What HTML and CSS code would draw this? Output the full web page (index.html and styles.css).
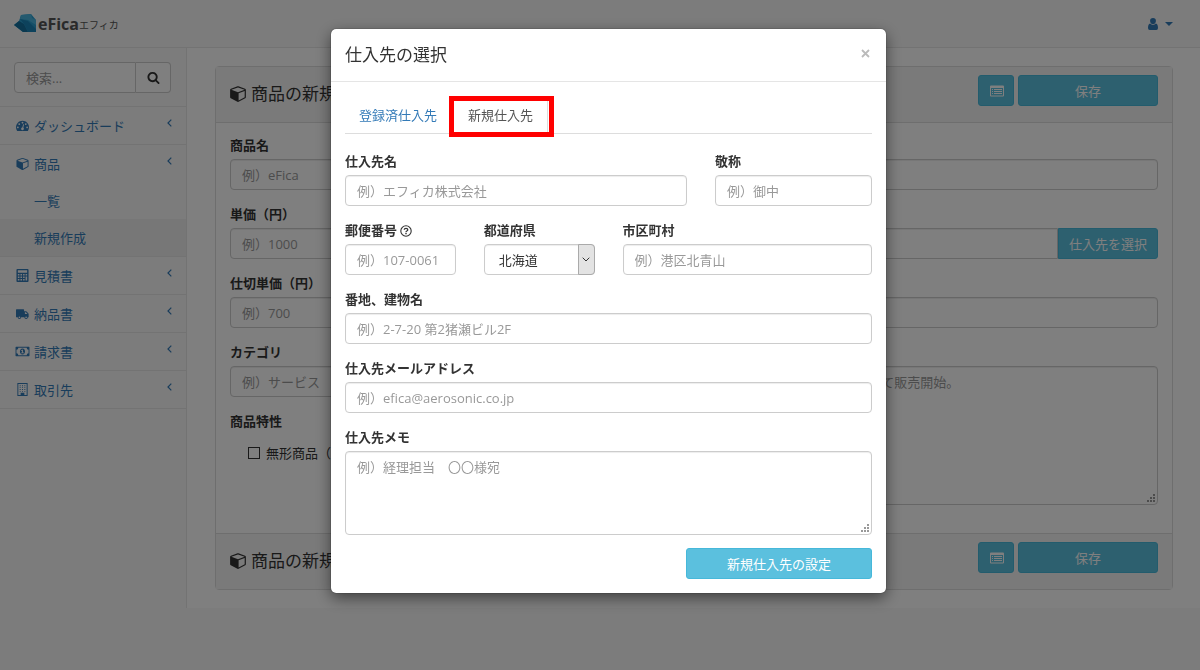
FILE: index.html
```html
<!DOCTYPE html>
<html lang="ja">
<head>
<meta charset="utf-8">
<meta name="viewport" content="width=device-width, initial-scale=1">
<title>eFica エフィカ</title>
<link rel="stylesheet" href="styles.css">
</head>
<body>
<svg class="sprite" aria-hidden="true">
  <symbol id="i-search" viewBox="0 0 1792 1792"><path d="M1216 832q0-185-131.5-316.5t-316.5-131.5-316.5 131.5-131.5 316.5 131.5 316.5 316.5 131.5 316.5-131.5 131.5-316.5zm512 832q0 52-38 90t-90 38q-54 0-90-38l-343-342q-179 124-399 124-143 0-273.5-55.5t-225-150-150-225-55.5-273.5 55.5-273.5 150-225 225-150 273.5-55.5 273.5 55.5 225 150 150 225 55.5 273.5q0 220-124 399l343 343q37 37 37 90z"/></symbol>
  <symbol id="i-cube" viewBox="0 0 1664 1792"><path d="M896 1629l640-349v-636l-640 233v752zm-64-865l698-254-698-254-698 254zm832-252v768q0 35-18 65t-49 47l-704 384q-28 16-61 16t-61-16l-704-384q-31-17-49-47t-18-65v-768q0-40 23-73t61-47l704-256q22-8 44-8t44 8l704 256q38 14 61 47t23 73z"/></symbol>
  <symbol id="i-dash" viewBox="0 0 1792 1792"><path d="M384 1152q0-53-37.5-90.5t-90.5-37.5-90.5 37.5-37.5 90.5 37.5 90.5 90.5 37.5 90.5-37.5 37.5-90.5zm192-448q0-53-37.5-90.5t-90.5-37.5-90.5 37.5-37.5 90.5 37.5 90.5 90.5 37.5 90.5-37.5 37.5-90.5zm428 481l101-382q6-26-7.5-48.5t-38.5-29.5-48 6.5-30 39.5l-101 382q-60 5-107 43.5t-63 98.5q-20 77 20 146t117 89 146-20 89-117q16-60-6-117t-72-91zm660-33q0-53-37.5-90.5t-90.5-37.5-90.5 37.5-37.5 90.5 37.5 90.5 90.5 37.5 90.5-37.5 37.5-90.5zm-640-640q0-53-37.5-90.5t-90.5-37.5-90.5 37.5-37.5 90.5 37.5 90.5 90.5 37.5 90.5-37.5 37.5-90.5zm448 192q0-53-37.5-90.5t-90.5-37.5-90.5 37.5-37.5 90.5 37.5 90.5 90.5 37.5 90.5-37.5 37.5-90.5zm320 448q0 261-141 483-19 29-54 29h-1402q-35 0-54-29-141-221-141-483 0-182 71-348t191-286 286-191 348-71 348 71 286 191 191 286 71 348z"/></symbol>
  <symbol id="i-calc" viewBox="0 0 14 14"><path fill-rule="evenodd" d="M1.500 0h11a1 1 0 0 1 1 1v12a1 1 0 0 1-1 1h-11a1 1 0 0 1-1-1V1a1 1 0 0 1 1-1zM2 1.300v2.700h10V1.300zM2 5.500v1.500h1.700V5.500zm2.800 0v1.500h1.700V5.500zm2.800 0v1.500h1.700V5.500zm2.700 0v1.500H12V5.500zM2 8.200v1.500h1.700V8.200zm2.800 0v1.500h1.700V8.200zm2.800 0v1.500h1.700V8.200zM2 10.900v1.500h1.700v-1.500zm2.800 0v1.500h1.700v-1.500zm2.800 0v1.500h1.700v-1.500zm2.700-2.700v4.200H12V8.200z"/></symbol>
  <symbol id="i-truck" viewBox="0 0 14 14"><path fill-rule="evenodd" d="M.5 2.500h7.700a.5.5 0 0 1 .5.500v1.500h1.800q.5 0 .9.400l1.800 1.900q.4.400.4.900V11h-.8a1.900 1.900 0 0 1-3.800 0H5.600a1.900 1.900 0 0 1-3.800 0H0V3a.5.5 0 0 1 .5-.5zM9.600 5.700v1.900h2.800l-1.800-1.900zM3.700 10.100a.9.900 0 1 0 0 1.800.9.900 0 0 0 0-1.800zm7.200 0a.9.900 0 1 0 0 1.800.9.900 0 0 0 0-1.800z"/></symbol>
  <symbol id="i-money" viewBox="0 0 15 14"><path fill-rule="evenodd" d="M.5 2h14a.5.5 0 0 1 .5.500v9a.5.5 0 0 1-.5.500H.5a.5.5 0 0 1-.5-.5v-9A.5.5 0 0 1 .5 2zM3 3a2 2 0 0 1-2 2v4a2 2 0 0 1 2 2h9a2 2 0 0 1 2-2V5a2 2 0 0 1-2-2zM7.500 3.800c3.700 0 3.700 6.400 0 6.400s-3.700-6.400 0-6.400zM7 5L5.900 6l.6.600.5-.4v2H6v.8h3v-.8H8V5z"/></symbol>
  <symbol id="i-building" viewBox="0 0 12 14"><path fill-rule="evenodd" d="M.5 0h11v14H.5zM1.500 1v12H4v-2.500h4V13h2.500V1zM3 2.500h1v1H3zm2.500 0h1v1h-1zm2.500 0h1v1H8zm-5 2h1v1H3zm2.500 0h1v1h-1zm2.500 0h1v1H8zm-5 2h1v1H3zm2.500 0h1v1h-1zm2.500 0h1v1H8zm-5 2h1v1H3zm2.500 0h1v1h-1zm2.500 0h1v1H8z"/></symbol>
  <symbol id="i-user" viewBox="0 0 10 12"><path d="M5 0a2.900 2.900 0 0 1 2.900 3C7.900 4.800 6.600 6.200 5 6.200S2.100 4.800 2.100 3A2.900 2.900 0 0 1 5 0zM2.200 5.600q1.200 1.400 2.800 1.400t2.800-1.400C9.500 5.800 10 8 10 10q0 2-1.700 2H1.700Q0 12 0 10c0-2 .5-4.200 2.200-4.400z"/></symbol>
  <symbol id="i-list" viewBox="0 0 14 12"><path fill-rule="evenodd" d="M1 .5h12a1 1 0 0 1 1 1v9a1 1 0 0 1-1 1H1a1 1 0 0 1-1-1v-9a1 1 0 0 1 1-1zM1 3v7.500h12V3zM2 4h1v1H2zm2 0h8v1H4zM2 6h1v1H2zm2 0h8v1H4zM2 8h1v1H2zm2 0h8v1H4z"/></symbol>
  <symbol id="i-left" viewBox="0 0 5 8"><path d="M4.300.7L1 4l3.300 3.300" fill="none" stroke="currentColor" stroke-width="1.200"/></symbol>
  <symbol id="i-down" viewBox="0 0 8 5"><path d="M.7.700L4 4 7.300.7" fill="none" stroke="currentColor"/></symbol>
  <symbol id="i-close" viewBox="0 0 9 9"><path d="M1 1l7 7M8 1L1 8" fill="none" stroke="currentColor" stroke-width="1.800"/></symbol>
  <symbol id="i-help" viewBox="0 0 12 12"><circle cx="6" cy="6" r="5.200" fill="none" stroke="currentColor" stroke-width="1.100"/><path d="M4.200 4.800Q4.300 3.300 6 3.300T7.800 4.700Q7.800 5.500 6.800 6 6 6.400 6 7.200" fill="none" stroke="currentColor" stroke-width="1.300"/><path d="M5.300 8h1.400v1.300H5.300z"/></symbol>
</svg>

<header class="topbar">
  <a class="brand" href="#">
    <svg class="brand-mark" viewBox="0 0 23 19" aria-hidden="true">
      <path fill="#2a9fd0" d="M7 1l10-1 5 6v12H9L0 11l5-4z"/>
      <path fill="#4bb4de" d="M7 1l10-1 1 4 4 2v5l-8-5-8-1z"/>
      <path fill="#14719f" d="M0 11l5-4 5 3 4 8H9z"/>
      <path fill="#1b85b8" d="M6 5l8 2 8 8v3h-8l-4-8z"/>
    </svg>
    <strong class="brand-name">eFica</strong><span class="brand-kana">エフィカ</span>
  </a>
  <button class="user-menu" type="button" aria-label="ユーザー"><svg class="user-icon"><use href="#i-user"/></svg><span class="caret"></span></button>
</header>

<div class="layout">
  <nav class="sidebar">
    <form class="search">
      <input class="search-input" type="text" placeholder="検索..." aria-label="検索">
      <button class="search-button" type="button" aria-label="検索する"><svg class="search-icon"><use href="#i-search"/></svg></button>
    </form>
    <ul class="menu">
      <li><a class="menu-link" href="#"><svg class="menu-icon"><use href="#i-dash"/></svg>ダッシュボード<svg class="arrow"><use href="#i-left"/></svg></a></li>
      <li><a class="menu-link" href="#"><svg class="menu-icon"><use href="#i-cube"/></svg>商品<svg class="arrow"><use href="#i-left"/></svg></a>
        <ul class="submenu">
          <li><a class="sub-link" href="#">一覧</a></li>
          <li><a class="sub-link current" href="#">新規作成</a></li>
        </ul>
      </li>
      <li><a class="menu-link" href="#"><svg class="menu-icon"><use href="#i-calc"/></svg>見積書<svg class="arrow"><use href="#i-left"/></svg></a></li>
      <li><a class="menu-link" href="#"><svg class="menu-icon"><use href="#i-truck"/></svg>納品書<svg class="arrow"><use href="#i-left"/></svg></a></li>
      <li><a class="menu-link" href="#"><svg class="menu-icon"><use href="#i-money"/></svg>請求書<svg class="arrow"><use href="#i-left"/></svg></a></li>
      <li><a class="menu-link" href="#"><svg class="menu-icon"><use href="#i-building"/></svg>取引先<svg class="arrow"><use href="#i-left"/></svg></a></li>
    </ul>
  </nav>

  <main class="content">
    <section class="panel">
      <div class="panel-bar panel-head">
        <h1 class="panel-title"><svg class="title-icon"><use href="#i-cube"/></svg>商品の新規作成</h1>
        <div class="actions"><button class="btn btn-icon" type="button" aria-label="一覧"><svg class="list-icon"><use href="#i-list"/></svg></button><button class="btn btn-save" type="button">保存</button></div>
      </div>
      <div class="panel-body">
        <div class="field"><label for="p-name">商品名</label><input class="control" id="p-name" type="text" placeholder="例）eFica"></div>
        <div class="halves">
          <div class="field"><label for="p-price">単価（円）</label><input class="control" id="p-price" type="text" placeholder="例）1000"></div>
          <div class="field"><label for="p-supplier">仕入先</label>
            <div class="group"><input class="control" id="p-supplier" type="text"><button class="btn btn-addon" type="button">仕入先を選択</button></div>
          </div>
        </div>
        <div class="halves">
          <div class="field"><label for="p-cost">仕切単価（円）</label><input class="control" id="p-cost" type="text" placeholder="例）700"></div>
          <div class="field"><label for="p-unit">単位</label><input class="control" id="p-unit" type="text"></div>
        </div>
        <div class="halves">
          <div>
            <div class="field"><label for="p-cat">カテゴリ</label><input class="control" id="p-cat" type="text" placeholder="例）サービス"></div>
            <fieldset class="traits"><legend>商品特性</legend><label class="check"><input type="checkbox">無形商品（）</label></fieldset>
          </div>
          <div class="field"><label for="p-memo">商品メモ</label><textarea class="control memo-tall" id="p-memo" placeholder="例）2017年10月より全国にて販売開始。"></textarea></div>
        </div>
      </div>
      <div class="panel-bar panel-foot">
        <h2 class="panel-title"><svg class="title-icon"><use href="#i-cube"/></svg>商品の新規作成</h2>
        <div class="actions"><button class="btn btn-icon" type="button" aria-label="一覧"><svg class="list-icon"><use href="#i-list"/></svg></button><button class="btn btn-save" type="button">保存</button></div>
      </div>
    </section>
  </main>
</div>

<div class="backdrop">
  <div class="modal" role="dialog" aria-modal="true" aria-labelledby="modal-title">
    <div class="modal-head">
      <h2 class="modal-title" id="modal-title">仕入先の選択</h2>
      <button class="close" type="button" aria-label="閉じる"><svg class="close-icon"><use href="#i-close"/></svg></button>
    </div>
    <div class="modal-body">
      <div class="tabs">
        <a class="tab" href="#">登録済仕入先</a>
        <a class="tab active" href="#">新規仕入先</a>
      </div>
      <form class="form-grid">
        <div class="field span-8"><label for="s-name">仕入先名</label><input class="control" id="s-name" type="text" placeholder="例）エフィカ株式会社"></div>
        <div class="field span-4"><label for="s-title">敬称</label><input class="control" id="s-title" type="text" placeholder="例）御中"></div>
        <div class="field span-3"><label for="s-zip">郵便番号 <svg class="help-icon"><use href="#i-help"/></svg></label><input class="control" id="s-zip" type="text" placeholder="例）107-0061"></div>
        <div class="field span-3"><label for="s-pref">都道府県</label>
          <div class="select"><select class="control" id="s-pref"><option>北海道</option></select><span class="select-arrow"><svg class="down-icon"><use href="#i-down"/></svg></span></div>
        </div>
        <div class="field span-6"><label for="s-city">市区町村</label><input class="control" id="s-city" type="text" placeholder="例）港区北青山"></div>
        <div class="field span-12"><label for="s-addr">番地、建物名</label><input class="control" id="s-addr" type="text" placeholder="例）2-7-20 第2猪瀬ビル2F"></div>
        <div class="field span-12"><label for="s-mail">仕入先メールアドレス</label><input class="control" id="s-mail" type="text" placeholder="例）efica@aerosonic.co.jp"></div>
        <div class="field span-12"><label for="s-memo">仕入先メモ</label><textarea class="control memo" id="s-memo" placeholder="例）経理担当　〇〇様宛"></textarea></div>
      </form>
      <div class="modal-actions"><button class="btn btn-submit" type="button">新規仕入先の設定</button></div>
    </div>
  </div>
</div>
</body>
</html>
```
FILE: styles.css
```css
* { box-sizing: border-box; }
body {
  margin: 0;
  min-height: 100vh;
  background: #f8f8f8;
  color: #333;
  font: 13px/18px "Open Sans", "Noto Sans CJK JP", sans-serif;
}
input, select, textarea, button { font: inherit; color: inherit; margin: 0; }
a { color: #337ab7; text-decoration: none; }
ul { list-style: none; margin: 0; padding: 0; }
h1, h2 { margin: 0; font-weight: 400; font-size: 17px; line-height: 24px; }
svg { fill: currentColor; flex: none; }
.sprite { position: absolute; width: 0; height: 0; }

.topbar {
  display: flex;
  align-items: center;
  justify-content: space-between;
  height: 48px;
  padding: 0 27px 0 14px;
  border-bottom: 1px solid #e7e7e7;
}
.brand { display: flex; align-items: center; color: #555; }
.brand-mark { width: 23px; height: 19px; margin-right: 1px; }
.brand-name { font: 700 16px/24px "Open Sans", sans-serif; color: #555; }
.brand-kana { font-size: 10px; padding-top: 2px; }
.user-menu { display: flex; align-items: center; gap: 7px; border: 0; padding: 0; background: none; color: #337ab7; }
.user-icon { width: 10px; height: 12px; }
.caret { border: 4px solid transparent; border-top-color: currentColor; border-bottom: 0; }

.layout { display: flex; align-items: flex-start; }
.sidebar { flex: none; width: 186px; }
.search { display: flex; padding: 14px 15px 13px 14px; border-bottom: 1px solid #e7e7e7; }
.search-input {
  flex: 1;
  min-width: 0;
  height: 31px;
  padding: 0 11px;
  border: 1px solid #ccc;
  border-radius: 4px 0 0 4px;
  background: #fff;
}
.search-button {
  display: grid;
  place-items: center;
  width: 35px;
  padding: 0;
  border: 1px solid #ccc;
  border-left: 0;
  border-radius: 0 4px 4px 0;
  background: #fff;
}
.search-icon { width: 13px; height: 13px; }
.menu > li { border-bottom: 1px solid #e7e7e7; }
.menu-link { display: flex; align-items: center; gap: 4px; height: 37px; padding: 0 14px 0 15px; }
.menu-icon { width: 15px; height: 13px; }
.arrow { width: 5px; height: 8px; margin: 0 0 5px auto; }
.sub-link { display: block; padding: 10px 34px 9px; }
.current { background: #eee; }

.content {
  flex: 1;
  min-width: 0;
  padding: 18px 27px 18px 28px;
  border-left: 1px solid #e7e7e7;
  background: #fff;
}
.panel { border: 1px solid #ddd; border-radius: 4px; }
.panel-bar { display: flex; justify-content: space-between; align-items: center; height: 56px; padding: 0 14px 8px; background: #f5f5f5; }
.panel-head { border-bottom: 1px solid #ddd; }
.panel-head .panel-title, .panel-foot .panel-title { padding-top: 6px; }
.panel-foot { border-top: 1px solid #ddd; }
.panel-title { display: flex; align-items: center; gap: 5px; color: #333; }
.title-icon { width: 16px; height: 17px; }
.panel-body { padding: 13px 14px; }
.actions { display: flex; gap: 4px; }
.halves { display: grid; grid-template-columns: 1fr 1fr; gap: 28px; }
.halves > div { min-width: 0; }

.field { display: flex; flex-direction: column; gap: 5px; margin-bottom: 15px; }
.field label, .traits legend { font-weight: 700; height: 18px; padding: 0; }
.control {
  width: 100%;
  height: 31px;
  padding: 5px 11px;
  border: 1px solid #ccc;
  border-radius: 4px;
  background: #fff;
  box-shadow: inset 0 1px 1px rgba(0, 0, 0, .075);
}
::placeholder { color: #999; opacity: 1; }
textarea.control { display: block; padding-top: 6px; }
.memo { height: 84px; }
.memo-tall { height: 139px; }
textarea::-webkit-resizer {
  background:
    linear-gradient(#999, #999) 11px 5px / 2px 2px no-repeat,
    linear-gradient(#999, #999) 8px 8px / 2px 2px no-repeat,
    linear-gradient(#999, #999) 11px 8px / 2px 2px no-repeat,
    linear-gradient(#999, #999) 5px 11px / 2px 2px no-repeat,
    linear-gradient(#999, #999) 8px 11px / 2px 2px no-repeat,
    linear-gradient(#999, #999) 11px 11px / 2px 2px no-repeat;
}
.group { display: flex; }
.group .control { flex: 1; min-width: 0; border-radius: 4px 0 0 4px; }
.traits { border: 0; margin: 0; padding: 0; }
.check { display: flex; align-items: center; gap: 6px; padding: 14px 0 0 18px; }
.check input {
  appearance: none;
  width: 12px;
  height: 12px;
  border: 1px solid #333;
  background: #fff;
}

.btn { height: 31px; padding: 0 11px; border: 1px solid #46b8da; border-radius: 3px; background: #5bc0de; color: #fff; }
.btn-icon { display: grid; place-items: center; width: 36px; }
.list-icon { width: 14px; height: 12px; }
.btn-save { width: 140px; }
.btn-addon { padding: 0 10px; border-radius: 0 3px 3px 0; }
.btn-submit { min-width: 186px; }

.backdrop {
  position: fixed;
  inset: 0;
  display: flex;
  justify-content: center;
  align-items: flex-start;
  padding: 29px 0 29px 17px;
  background: rgba(0, 0, 0, .5);
}
.modal {
  width: 100%;
  max-width: 555px;
  border-radius: 5px;
  background: #fff;
  box-shadow: 0 5px 15px rgba(0, 0, 0, .5), 0 0 1px #000;
}
.modal-head { display: flex; justify-content: space-between; align-items: center; padding: 14px; border-bottom: 1px solid #e5e5e5; }
.close { display: grid; border: 0; padding: 0 2px 4px; background: none; color: #bbb; }
.close-icon { width: 9px; height: 9px; }
.modal-body { padding: 14px; }
.tabs { display: flex; gap: 1px; border-bottom: 1px solid #ddd; }
.tab { padding: 9px 14px; border: 1px solid transparent; border-bottom: 0; }
.tab:first-child { padding-left: 13px; }
.active { position: relative; color: #555; border-color: #ddd; border-radius: 4px 4px 0 0; }
.active::after { content: ""; position: absolute; inset: -1px -7px -4px -5px; border: 5px solid #f00; }
.form-grid { display: grid; grid-template-columns: repeat(12, 1fr); column-gap: 28px; padding-top: 18px; }
.form-grid .field { min-width: 0; }
.form-grid .field:last-child { margin-bottom: 13px; }
.span-3 { grid-column: span 3; }
.span-4 { grid-column: span 4; }
.span-6 { grid-column: span 6; }
.span-8 { grid-column: span 8; }
.span-12 { grid-column: span 12; }
.help-icon { width: 12px; height: 12px; vertical-align: -2px; }
.select { display: grid; }
.select > * { grid-area: 1 / 1; }
.select select { appearance: none; padding: 0 14px; }
.select-arrow {
  display: grid;
  place-items: center;
  justify-self: end;
  width: 17px;
  border: 1px solid #aaa;
  border-radius: 0 4px 4px 0;
  background: #e3e3e3;
  pointer-events: none;
}
.down-icon { width: 8px; height: 5px; }
.modal-actions { display: flex; justify-content: flex-end; }
```
